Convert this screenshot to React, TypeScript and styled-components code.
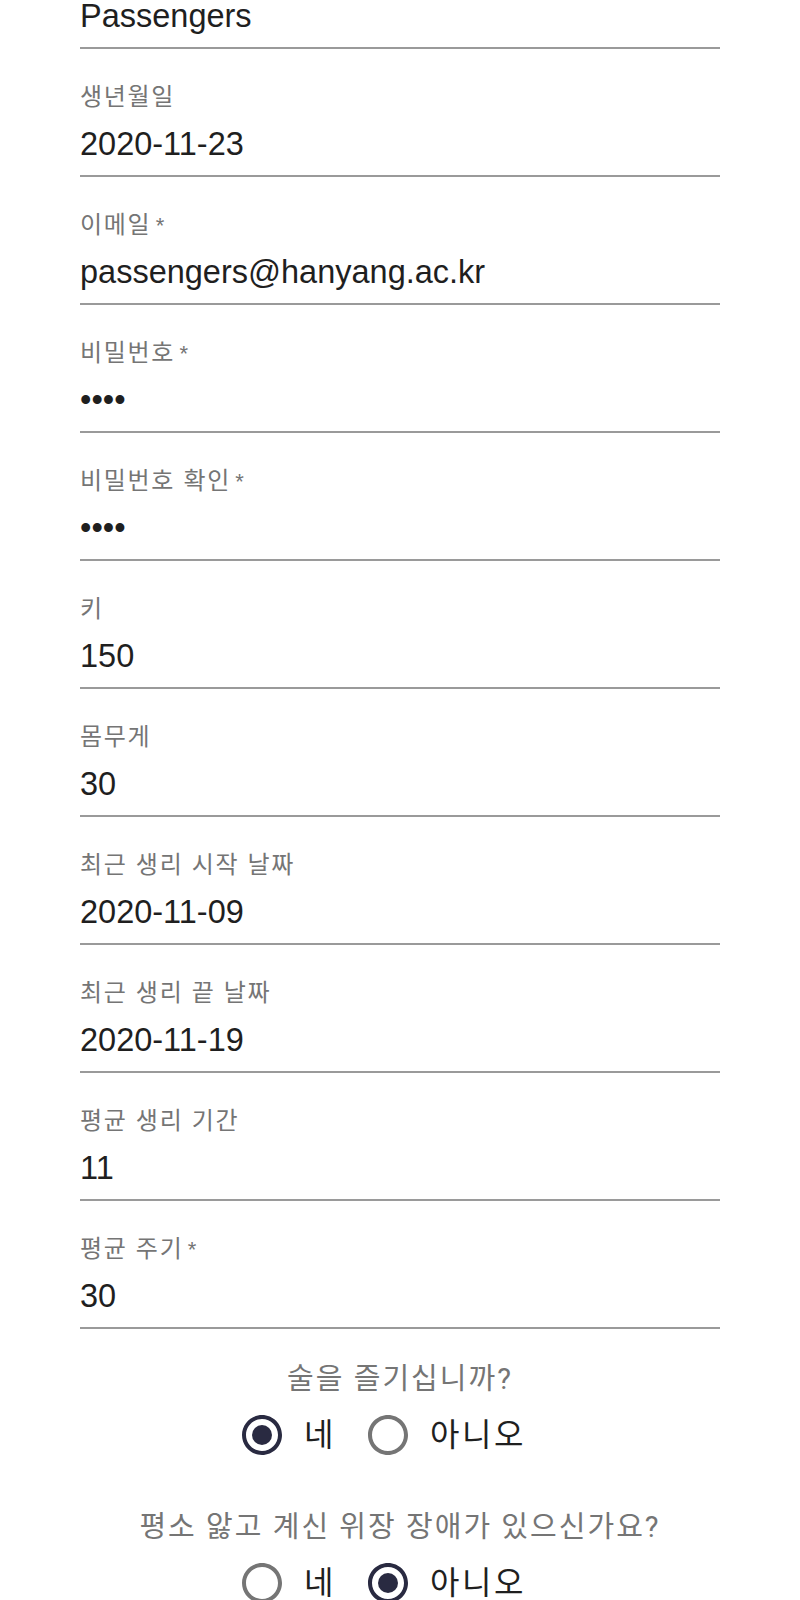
import React from "react";
import styled, { createGlobalStyle } from "styled-components";

const GlobalStyle = createGlobalStyle`
  html, body {
    margin: 0;
    padding: 0;
    background: #ffffff;
  }
  body {
    font-family: "Liberation Sans", "Noto Sans CJK KR", sans-serif;
    overflow: hidden;
  }
`;

const Form = styled.form`
  width: 640px;
  margin: 0 auto;
  display: flex;
  flex-direction: column;
`;

const Field = styled.div<{ $first?: boolean }>`
  display: flex;
  flex-direction: column;
  padding-top: ${(p) => (p.$first ? "0" : "36px")};
  padding-bottom: 15px;
  border-bottom: 2px solid #9a9a9a;
`;

const Label = styled.label`
  font-family: "Liberation Sans", "Noto Sans CJK KR", sans-serif;
  font-size: 24px;
  line-height: 24px;
  height: 24px;
  letter-spacing: 0.07em;
  color: #757575;
  margin-bottom: 19px;
  white-space: nowrap;
`;

const Asterisk = styled.span`
  font-size: 22px;
  letter-spacing: 0;
`;

const Value = styled.div`
  font-family: "Liberation Sans", "Noto Sans CJK KR", sans-serif;
  font-size: 32.5px;
  line-height: 32px;
  height: 32px;
  color: #1f1f1f;
  white-space: nowrap;
`;

const Question = styled.fieldset`
  border: 0;
  margin: 37px 0 0;
  padding: 0;
  display: flex;
  flex-direction: column;
  align-items: center;
`;

const QuestionText = styled.legend`
  display: block;
  width: 100%;
  padding: 0;
  text-align: center;
  font-family: "Roboto", "Noto Sans CJK KR", sans-serif;
  font-size: 29px;
  line-height: 27px;
  letter-spacing: 0.07em;
  color: #757575;
`;

const RadioRow = styled.div`
  display: flex;
  justify-content: center;
  width: 100%;
`;

const Option = styled.label`
  display: inline-flex;
  align-items: center;
  margin-left: -22px;
  margin-right: 32px;
  cursor: pointer;
`;

const RadioBox = styled.span<{ $checked: boolean }>`
  display: inline-flex;
  padding: 18px;
  color: ${(p) => (p.$checked ? "#292a41" : "#757575")};
  svg {
    width: 48px;
    height: 48px;
    display: block;
  }
`;

const OptionText = styled.span`
  font-family: "Liberation Sans", "Noto Sans CJK KR", sans-serif;
  font-size: 32px;
  line-height: 40px;
  letter-spacing: 0.08em;
  color: #1f1f1f;
`;

const RadioIcon: React.FC<{ checked: boolean }> = ({ checked }) => (
  <svg viewBox="0 0 24 24" fill="currentColor" aria-hidden="true">
    <path d="M12 2C6.48 2 2 6.48 2 12s4.48 10 10 10 10-4.48 10-10S17.52 2 12 2zm0 18c-4.42 0-8-3.58-8-8s3.58-8 8-8 8 3.58 8 8-3.58 8-8 8z" />
    {checked && <circle cx="12" cy="12" r="5" />}
  </svg>
);

type FieldData = { label?: string; required?: boolean; value: string };

const fields: FieldData[] = [
  { value: "Passengers" },
  { label: "생년월일", value: "2020-11-23" },
  { label: "이메일", required: true, value: "passengers@hanyang.ac.kr" },
  { label: "비밀번호", required: true, value: "••••" },
  { label: "비밀번호 확인", required: true, value: "••••" },
  { label: "키", value: "150" },
  { label: "몸무게", value: "30" },
  { label: "최근 생리 시작 날짜", value: "2020-11-09" },
  { label: "최근 생리 끝 날짜", value: "2020-11-19" },
  { label: "평균 생리 기간", value: "11" },
  { label: "평균 주기", required: true, value: "30" },
];

const questions = [
  { text: "술을 즐기십니까?", answer: "yes" },
  { text: "평소 앓고 계신 위장 장애가 있으신가요?", answer: "no" },
];

export default function App() {
  return (
    <>
      <GlobalStyle />
      <Form>
        {fields.map((f, i) => (
          <Field key={i} $first={!f.label}>
            {f.label && (
              <Label>
                {f.label}
                {f.required && <Asterisk>{"\u2009*"}</Asterisk>}
              </Label>
            )}
            <Value>{f.value}</Value>
          </Field>
        ))}
        {questions.map((q, i) => (
          <Question key={i}>
            <QuestionText>{q.text}</QuestionText>
            <RadioRow>
              <Option>
                <RadioBox $checked={q.answer === "yes"}>
                  <RadioIcon checked={q.answer === "yes"} />
                </RadioBox>
                <OptionText>네</OptionText>
              </Option>
              <Option>
                <RadioBox $checked={q.answer === "no"}>
                  <RadioIcon checked={q.answer === "no"} />
                </RadioBox>
                <OptionText>아니오</OptionText>
              </Option>
            </RadioRow>
          </Question>
        ))}
      </Form>
    </>
  );
}
